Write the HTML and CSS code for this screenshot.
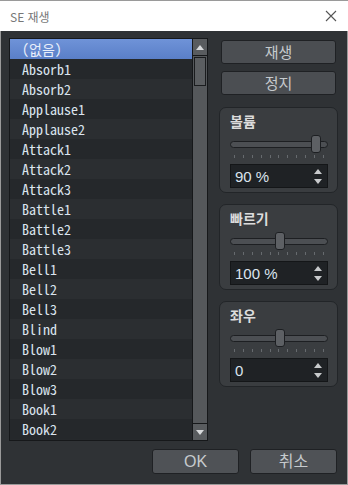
FILE: index.html
```html
<!DOCTYPE html>
<html lang="ko">
<head>
  <meta charset="UTF-8">
  <title>SE 재생</title>
  <link rel="stylesheet" href="styles.css">
</head>
<body>
  <div class="window">
    <div class="titlebar">
      <span class="title">SE 재생</span>
      <svg class="close" width="12" height="12" viewBox="0 0 12 12">
        <path d="M1 1L11 11M11 1L1 11" stroke="#555" stroke-width="1.1" fill="none"/>
      </svg>
    </div>

    <div class="content">
      <div class="listbox">
        <ul class="items" id="items"></ul>
        <div class="scrollbar">
          <div class="arrow up"><svg width="8" height="5" viewBox="0 0 8 5"><path d="M0 5L4 0L8 5Z" fill="#d8dadc"/></svg></div>
          <div class="track"><div class="thumb"></div></div>
          <div class="arrow down"><svg width="8" height="5" viewBox="0 0 8 5"><path d="M0 0L4 5L8 0Z" fill="#d8dadc"/></svg></div>
        </div>
      </div>

      <div class="side">
        <button class="btn">재생</button>
        <button class="btn">정지</button>

        <div class="group">
          <div class="group-label">볼륨</div>
          <div class="slider"><div class="rail"></div><div class="knob" style="left: 81px"></div></div>
          <div class="ticks"><i></i><i></i><i></i><i></i><i></i><i></i><i></i><i></i><i></i><i></i><i></i></div>
          <div class="spin"><span>90 %</span><div class="spin-arrows"><svg width="8" height="5" viewBox="0 0 8 5"><path d="M0 5L4 0L8 5Z" fill="#c8cacc"/></svg><svg width="8" height="5" viewBox="0 0 8 5"><path d="M0 0L4 5L8 0Z" fill="#c8cacc"/></svg></div></div>
        </div>

        <div class="group">
          <div class="group-label">빠르기</div>
          <div class="slider"><div class="rail"></div><div class="knob" style="left: 45px"></div></div>
          <div class="ticks"><i></i><i></i><i></i><i></i><i></i><i></i><i></i><i></i><i></i><i></i><i></i></div>
          <div class="spin"><span>100 %</span><div class="spin-arrows"><svg width="8" height="5" viewBox="0 0 8 5"><path d="M0 5L4 0L8 5Z" fill="#c8cacc"/></svg><svg width="8" height="5" viewBox="0 0 8 5"><path d="M0 0L4 5L8 0Z" fill="#c8cacc"/></svg></div></div>
        </div>

        <div class="group">
          <div class="group-label">좌우</div>
          <div class="slider"><div class="rail"></div><div class="knob" style="left: 45px"></div></div>
          <div class="ticks"><i></i><i></i><i></i><i></i><i></i><i></i><i></i><i></i><i></i><i></i><i></i></div>
          <div class="spin"><span>0</span><div class="spin-arrows"><svg width="8" height="5" viewBox="0 0 8 5"><path d="M0 5L4 0L8 5Z" fill="#c8cacc"/></svg><svg width="8" height="5" viewBox="0 0 8 5"><path d="M0 0L4 5L8 0Z" fill="#c8cacc"/></svg></div></div>
        </div>
      </div>
    </div>

    <div class="footer">
      <button class="btn footer-btn">OK</button>
      <button class="btn footer-btn">취소</button>
    </div>
  </div>

  <script>
    const names = ["(없음)", "Absorb1", "Absorb2", "Applause1", "Applause2", "Attack1", "Attack2", "Attack3",
      "Battle1", "Battle2", "Battle3", "Bell1", "Bell2", "Bell3", "Blind", "Blow1", "Blow2", "Blow3", "Book1", "Book2"];
    const list = document.getElementById("items");
    names.forEach((name, index) => {
      const li = document.createElement("li");
      li.textContent = name;
      if (index === 0) li.className = "selected";
      list.appendChild(li);
    });
  </script>
</body>
</html>
```

FILE: styles.css
```css
body {
  margin: 0;
  font-family: "DejaVu Sans", "Noto Sans CJK KR", sans-serif;
  background: #2f3235;
}
.window {
  width: 348px;
  height: 485px;
  box-sizing: border-box;
  border: 1px solid #9a9a9a;
  border-top: none;
  background: #2f3235;
  display: flex;
  flex-direction: column;
}
.titlebar {
  height: 31px;
  background: #fff;
  border-top: 1px solid #9a9a9a;
  margin: 0 -1px;
  box-sizing: border-box;
  display: flex;
  align-items: center;
  justify-content: space-between;
  padding: 0 11px 0 10px;
}
.title {
  font-family: "Noto Sans CJK KR", "Liberation Sans", sans-serif;
  font-size: 12px;
  color: #777;
}
.content {
  display: flex;
  padding: 7px 0 0 8px;
}
.listbox {
  width: 199px;
  height: 403px;
  box-sizing: border-box;
  border: 1px solid #16181a;
  display: flex;
  background: #26292c;
}
.items {
  list-style: none;
  margin: 0;
  padding: 0;
  flex: 1;
  overflow: hidden;
}
.items li {
  height: 20px;
  line-height: 20px;
  padding-left: 12px;
  font-family: "Noto Sans Mono CJK KR", "DejaVu Sans Mono", monospace;
  font-size: 14px;
  color: #dbe4ee;
  background: #25282b;
}
.items li:nth-child(odd) {
  background: #2b2e31;
}
.items li.selected {
  background: linear-gradient(#6f93d8, #5a7fc8);
  color: #e8eefa;
}
.scrollbar {
  width: 14px;
  border-left: 1px solid #16181a;
  display: flex;
  flex-direction: column;
  background: #55585b;
}
.arrow {
  height: 16px;
  display: flex;
  align-items: center;
  justify-content: center;
  background: #595c5f;
}
.arrow.up {
  border-bottom: 1px solid #16181a;
}
.arrow.down {
  border-top: 1px solid #16181a;
}
.track {
  flex: 1;
  padding: 1px 1px;
}
.thumb {
  height: 27px;
  border: 1px solid #1a1c1e;
  background: #5b5e61;
}
.side {
  width: 119px;
  margin-left: 11px;
  display: flex;
  flex-direction: column;
}
.btn {
  font-family: "Noto Sans CJK KR", "Liberation Sans", sans-serif;
  font-size: 15px;
  color: #c6cacd;
  background: #4b4e52;
  border: 1px solid #1f2124;
  border-radius: 3px;
  padding: 0;
  height: 24px;
  line-height: 20px;
  cursor: pointer;
}
.side .btn {
  margin: 2px 2px 0 2px;
}
.side .btn + .btn {
  margin-top: 7px;
}
.group {
  margin-top: 11px;
  height: 86px;
  box-sizing: border-box;
  border: 1px solid #222528;
  border-radius: 7px;
  background: #3a3d40;
  padding: 2px 9px 0 10px;
}
.side .btn + .group {
  margin-top: 12px;
}
.group-label {
  font-family: "Noto Sans CJK KR", sans-serif;
  font-weight: bold;
  font-size: 14px;
  color: #dcdcdc;
  height: 22px;
  line-height: 22px;
}
.slider {
  position: relative;
  height: 18px;
  margin-top: 3px;
}
.rail {
  position: absolute;
  left: 0;
  right: 0;
  top: 6px;
  height: 5px;
  border: 1px solid #1d1f22;
  border-radius: 4px;
  background: #4c4f53;
}
.knob {
  position: absolute;
  top: 0;
  width: 8px;
  height: 16px;
  border: 1px solid #1d1f22;
  border-radius: 3px;
  background: #5d6064;
}
.ticks {
  display: flex;
  justify-content: space-between;
  padding: 0 4px;
  height: 4px;
  margin-top: 2px;
}
.ticks i {
  width: 1px;
  height: 3px;
  background: #666a6e;
}
.spin {
  margin: 5px 0 0 0;
  height: 24px;
  box-sizing: border-box;
  border: 1px solid #141618;
  background: #1f2225;
  display: flex;
  align-items: center;
  justify-content: space-between;
  padding: 0 5px 0 4px;
  font-family: "Liberation Sans", "Noto Sans CJK KR", sans-serif;
  font-size: 15px;
  color: #dbe4ee;
}
.spin-arrows {
  display: flex;
  flex-direction: column;
  gap: 5px;
}
.spin-arrows svg {
  display: block;
}
.footer {
  display: flex;
  justify-content: flex-end;
  gap: 11px;
  padding: 8px 10px 0 0;
}
.footer-btn {
  width: 87px;
  height: 25px;
  background: #4f5256;
  font-family: "Liberation Sans", "Noto Sans CJK KR", sans-serif;
  font-size: 16px;
}
```
